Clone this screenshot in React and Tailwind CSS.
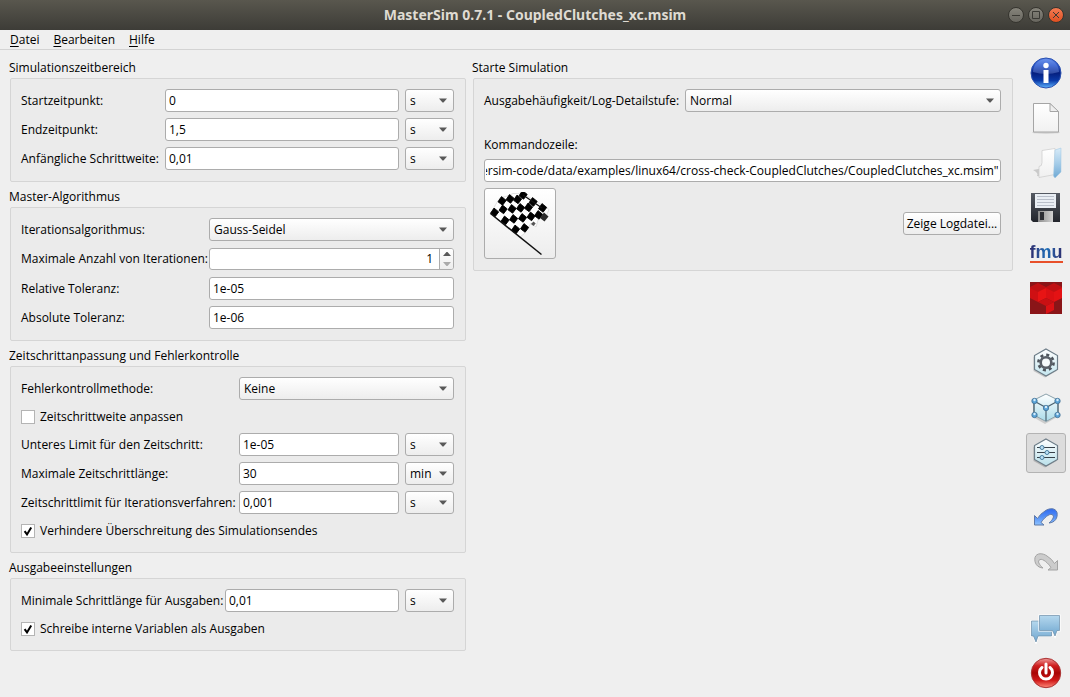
import { useLayoutEffect, useRef, useState } from "react";

const fieldBox =
  "h-[23px] w-full min-w-0 rounded-[3px] border border-[#acacac] bg-white text-black outline-none focus:border-[#6f9fd0]";
const raised = "rounded-[3px] border border-[#acacac] bg-gradient-to-b from-white to-[#ededed]";

function Group({ title, children }) {
  return (
    <section>
      <h2 className="h-[19px] leading-[18px]">{title}</h2>
      <div className="ml-px rounded-[2px] border border-[#d5d5d5] bg-[#ebebeb] pt-[10px] pr-[11px] pb-[11px] pl-[10px]">
        {children}
      </div>
    </section>
  );
}

function Select({ id, label, options }) {
  return (
    <div className="grid min-w-0 items-center">
      <select
        id={id}
        aria-label={label}
        className={`${raised} col-start-1 row-start-1 h-[23px] w-full appearance-none pr-5 pl-1 text-black outline-none`}
      >
        {options.map((o) => (
          <option key={o}>{o}</option>
        ))}
      </select>
      <svg
        viewBox="0 0 8 5"
        className="pointer-events-none col-start-1 row-start-1 mr-[7px] h-[5px] w-2 justify-self-end"
        aria-hidden="true"
      >
        <path d="M0 .5h8L4.500 4.500h-1z" fill="#595959" />
      </svg>
    </div>
  );
}

function TextField({ id, value }) {
  return <input id={id} type="text" defaultValue={value} className={`${fieldBox} px-[3px]`} />;
}

function TimeRow({ id, label, value, unit }) {
  return (
    <>
      <label htmlFor={id} className="whitespace-nowrap">{label}</label>
      <TextField id={id} value={value} />
      <Select label={`${label} Einheit`} options={unit === "min" ? ["min", "s", "h"] : ["s", "min", "h"]} />
    </>
  );
}

function Check({ label, checked }) {
  return (
    <label className="col-span-full flex h-[21px] items-center gap-[5px]">
      <span className="grid size-[14px] place-items-center">
        <input
          type="checkbox"
          defaultChecked={checked}
          className="peer col-start-1 row-start-1 size-[14px] appearance-none border border-[#b4b4b4] bg-white"
        />
        <svg
          viewBox="0 0 10 10"
          className="pointer-events-none invisible col-start-1 row-start-1 size-[10px] peer-checked:visible"
          aria-hidden="true"
        >
          <path d="M1.6 5.2 4 8.4 8.2 1.4" fill="none" stroke="#000" strokeWidth="2" />
        </svg>
      </span>
      {label}
    </label>
  );
}

function Spin({ id }) {
  const [n, setN] = useState(1);
  return (
    <div className="flex h-6 py-px">
      <div className="flex flex-1 overflow-hidden rounded-[3px] border border-[#acacac] bg-white">
        <input
          id={id}
          type="text"
          inputMode="numeric"
          value={n}
          onChange={(e) => setN(Number(e.target.value) || 1)}
          className="min-w-0 flex-1 px-[6px] text-right outline-none"
        />
        <div className="flex w-[14px] flex-col border-l border-[#acacac] bg-gradient-to-b from-white to-[#ededed]">
          <button type="button" aria-label="Erhöhen" onClick={() => setN(n + 1)} className="grid flex-1 place-items-center">
            <svg viewBox="0 0 8 4" className="h-1 w-2"><path d="M0 4h8L4.5 0h-1z" fill="#595959" /></svg>
          </button>
          <button type="button" aria-label="Verringern" onClick={() => setN(Math.max(1, n - 1))} className="grid flex-1 place-items-center">
            <svg viewBox="0 0 8 4" className="h-1 w-2"><path d="M0 0h8L4.5 4h-1z" fill="#aaa" /></svg>
          </button>
        </div>
      </div>
    </div>
  );
}

function CommandLine() {
  const ref = useRef(null);
  useLayoutEffect(() => {
    ref.current.scrollLeft = ref.current.scrollWidth;
  }, []);
  return (
    <input
      id="cmd"
      ref={ref}
      type="text"
      readOnly
      defaultValue={'stersim-code/data/examples/linux64/cross-check-CoupledClutches/CoupledClutches_xc.msim"'}
      className={`${fieldBox} px-px text-right`}
    />
  );
}

const flagSquares = [
  [35, 3], [14, 9], [22, 7], [29.5, 7.5], [45, 10], [54.500, 16],
  [6.500, 20.500], [15, 17.500], [24, 17], [32.500, 16], [40.500, 15.500],
  [17, 28.500], [25.500, 27], [34.500, 26], [43, 24.500], [50.500, 23],
  [27.500, 37.500], [36.500, 36],
];

function FlagIcon() {
  return (
    <svg viewBox="0 0 64 64" className="size-16" aria-hidden="true">
      <path
        d="M3 21.500Q8 11 12 6Q18 5 25 1.500Q30 2 33 1Q46 7 61 17.500L57 27L51 25L48 35L43 31L37 41L32 45Z"
        fill="#fefefe" stroke="#d4d4d4" strokeWidth=".7"
      />
      {flagSquares.map(([x, y]) => (
        <path
          key={`${x}-${y}`}
          d={`M${x - 0.5} ${y - 4.4}L${x + 4.2} ${y - 0.6}L${x + 0.6} ${y + 4.2}L${x - 4} ${y + 0.8}Z`}
          stroke="#000" strokeWidth=".9" strokeLinejoin="round"
        />
      ))}
      <path d="m56 20.500 4.500 4-4 5-4.500-3.500z" fill="#2c2c2c" />
      <path d="m45.500 29.500 2.200 2-2.200 2.500-2.500-2z" fill="#555" />
      <path d="m35 3 19 13" stroke="#111" strokeWidth="1.300" />
      <path d="M2.500 21.500 53.500 62.500" stroke="#111" strokeWidth="1.500" />
    </svg>
  );
}

const hex = "M16 2 27.500 8.500v14L16 29 4.500 22.500v-14z";

function Shade({ id, stops }) {
  return (
    <linearGradient id={id} x1="0" y1="0" x2="0" y2="1">
      {stops.map((c, i) => (
        <stop key={c + i} offset={i / (stops.length - 1)} stopColor={c} />
      ))}
    </linearGradient>
  );
}

const icons = {
  info: (
    <>
      <defs><Shade id="i1" stops={["#5b86e8", "#2450c4", "#061f7e", "#0a3aa8", "#5fb4ff"]} /></defs>
      <circle cx="16" cy="16" r="15" fill="url(#i1)" stroke="#2a50b0" />
      <path d="M3 15a13 13 0 0 1 26 0q-13 4-26 0z" fill="#9ab8ff" opacity=".3" />
      <circle cx="16" cy="8.500" r="2.700" fill="#fff" />
      <rect x="13.500" y="13" width="5" height="13" fill="#fff" />
    </>
  ),
  fresh: (
    <>
      <defs><Shade id="n1" stops={["#fff", "#f1f1f1"]} /></defs>
      <ellipse cx="16" cy="30.500" rx="14" ry="1.200" fill="#bbb" opacity=".6" />
      <path d="M3.500 1.500H20L28.500 10v20h-25z" fill="url(#n1)" stroke="#a5a5a5" />
      <path d="M20 1.500V9.500h8.500z" fill="#eee" stroke="#a5a5a5" />
    </>
  ),
  open: (
    <>
      <defs>
        <Shade id="o1" stops={["#fff", "#f0f0f0"]} />
        <Shade id="o2" stops={["#d8ebf8", "#a6cde9", "#6fa9d4"]} />
      </defs>
      <path d="M3 23 11 21.500v8L7 29q2-3-4-6z" fill="#c9c9c9" />
      <path d="M12 3.500 25 1.500v26l-16 3v-11q3 0 3-4z" fill="url(#o1)" stroke="#cfcfcf" strokeWidth=".8" />
      <path d="M25 3 31 1v24l-6 6-1.500-2z" fill="url(#o2)" stroke="#9fc7e2" strokeWidth=".5" />
    </>
  ),
  save: (
    <>
      <defs>
        <Shade id="s1" stops={["#555a63", "#22252c"]} />
        <linearGradient id="s2"><stop stopColor="#8b8b8b" /><stop offset="1" stopColor="#d2d2d2" /></linearGradient>
      </defs>
      <path d="M1 1h29v29H3l-2-2z" fill="url(#s1)" />
      <path d="M5 2h21v14H5z" fill="#e9eef4" />
      <path d="M7 4.500h17M7 7.500h17M7 10.500h17M7 13.500h17" stroke="#b9bfca" />
      <path d="M8 19h15v11H8z" fill="url(#s2)" />
      <path d="M10 20h4v8h-4z" fill="#2b2d33" />
    </>
  ),
  modelica: (
    <>
      <rect width="32" height="32" fill="#8a1518" />
      <path d="M0 5 8 1l8 4 8-4 8 4v2l-8 4-8-4-8 4-8-4z" fill="#c01013" />
      <path d="M0 6l8 4v10l-8-4z" fill="#cf1013" />
      <path d="m8 10 8-4v10l-8 4z" fill="#e81414" />
      <path d="m16 6 8 4v10l-8-4z" fill="#db1013" />
      <path d="m24 10 8-4v10l-8 4z" fill="#e41214" />
      <path d="m8 20 8-4 8 4-8 4z" fill="#c91013" />
      <path d="m16 24 8-4v8l-8 4z" fill="#dc1114" />
    </>
  ),
  gear: (
    <>
      <defs><Shade id="g1" stops={["#fff", "#c4e6ef"]} /></defs>
      <path d={hex} transform="translate(-1 1.500)" fill="#aaa" opacity=".6" />
      <path d={hex} fill="url(#g1)" stroke="#6d7d88" strokeWidth="1.200" />
      <circle cx="16" cy="15.500" r="7.600" fill="none" stroke="#4d535b" strokeWidth="2.600" strokeDasharray="2.985 2.985" />
      <circle cx="16" cy="15.500" r="5.300" fill="#f7fbfc" stroke="#5a6068" strokeWidth="2.600" />
    </>
  ),
  cube: (
    <>
      <defs><Shade id="c1" stops={["#fff", "#a9dbe9"]} /></defs>
      <path d="m15 4 12 6v15l-12 7-12-7V10z" fill="#aaa" opacity=".5" />
      <path d="m16 2 12 6v15l-12 6.500L4 23V8z" fill="url(#c1)" stroke="#8aa1ab" />
      <path d="M4 9 16 15.500 28 9M16 15v14M4 9v14M28 9v14" fill="none" stroke="#4d6370" strokeWidth="1.200" />
      {[[4.500, 9], [27.500, 9], [16, 16], [4.500, 23], [27.500, 23]].map(([x, y]) => (
        <g key={`${x}-${y}`}>
          <circle cx={x} cy={y} r="2.700" fill="#5ba4d8" stroke="#3f6f93" strokeWidth=".8" />
          <circle cx={x} cy={y - 1} r="1.200" fill="#d5edfb" />
        </g>
      ))}
    </>
  ),
  sliders: (
    <>
      <defs><Shade id="t1" stops={["#fff", "#b9e0ea"]} /></defs>
      <path d={hex} transform="translate(-1 1.500)" fill="#999" opacity=".6" />
      <path d={hex} fill="url(#t1)" stroke="#6d7d88" strokeWidth="1.200" />
      <path d="M7 10.500h18M7 15.500h18M7 20.500h18" stroke="#39424a" strokeWidth="1.200" />
      {[[12, 10.5], [17, 15.5], [12, 20.5]].map(([x, y]) => (
        <circle key={y} cx={x} cy={y} r="2" fill="#bfe2f5" stroke="#4a7fa0" />
      ))}
    </>
  ),
  undo: (
    <>
      <defs><Shade id="u1" stops={["#2f6af0", "#5590f6", "#8ec3ff"]} /></defs>
      <path
        d="M4.500 13.500V23H14l-3-2.500C14 16 19 11.500 22 12.500c3 1.500 1 5-3 8.500 6-.5 9-5 8-10.500-1.500-5-8-4.500-12-1.500Q10 12 7.500 16.500z"
        fill="url(#u1)" stroke="#5f7aa8" strokeLinejoin="round"
      />
    </>
  ),
  redo: (
    <path
      d="M27.500 13.500V23H18l3-2.500C18 16 13 11.500 10 12.500c-3 1.500-1 5 3 8.500-6-.5-9-5-8-10.500 1.500-5 8-4.500 12-1.500Q22 12 24.500 16.500z"
      fill="#ccc" stroke="#a4a4a4" strokeLinejoin="round"
    />
  ),
  chat: (
    <>
      <defs><Shade id="m1" stops={["#b5d8ee", "#6fa6cf"]} /></defs>
      <path d="M1.500 9h20v15H8l-2 6-2.500-6h-2z" fill="url(#m1)" stroke="#fff" strokeWidth="2.200" />
      <path d="M1.500 9h20v15H8l-2 6-2.500-6h-2z" fill="url(#m1)" stroke="#6c8da8" strokeWidth=".7" />
      <path d="M9.500 3.500h20v15h-2.500l-2 5.500-2.500-5.500h-13z" fill="url(#m1)" stroke="#fff" strokeWidth="2.200" />
      <path d="M9.500 3.500h20v15h-2.500l-2 5.500-2.500-5.500h-13z" fill="url(#m1)" stroke="#6c8da8" strokeWidth=".7" />
    </>
  ),
  power: (
    <>
      <defs><Shade id="p1" stops={["#f09a9a", "#cf2020", "#a80505", "#d01818", "#ff8a7a"]} /></defs>
      <circle cx="16" cy="16" r="14.700" fill="url(#p1)" stroke="#a33" />
      <path d="M12 10.500a6.500 6.500 0 1 0 8 0" fill="none" stroke="#fff" strokeWidth="3" strokeLinecap="round" />
      <path d="M16 7v9" stroke="#fff" strokeWidth="3" strokeLinecap="round" />
    </>
  ),
};

function Tool({ icon, label, active }) {
  return (
    <button
      type="button"
      aria-label={label}
      className={`grid size-10 place-items-center rounded-[3px] border ${
        active ? "border-[#b3b3b3] bg-[#dcdcdc]" : "border-transparent"
      }`}
    >
      {icon === "fmu" ? (
        <span className="border-b-2 border-[#e8502a] bg-gradient-to-r from-[#2b2a6c] via-[#1a6fb8] to-[#2b2a6c] bg-clip-text font-['Liberation_Sans',sans-serif] text-[18px] leading-[17px] font-bold text-transparent">
          fmu
        </span>
      ) : (
        <svg viewBox="0 0 32 32" className="size-8" aria-hidden="true">{icons[icon]}</svg>
      )}
    </button>
  );
}

function WindowButton({ label, close, children }) {
  return (
    <button
      type="button"
      aria-label={label}
      className={`grid size-4 place-items-center rounded-full border border-[#36352f] ${
        close ? "bg-gradient-to-b from-[#f47b52] to-[#de4f1f]" : "bg-gradient-to-b from-[#86847b] to-[#68665f]"
      }`}
    >
      <svg viewBox="0 0 10 10" className="size-[10px]" fill="none" stroke="#3a3934">{children}</svg>
    </button>
  );
}

export default function App() {
  return (
    <div className="flex min-h-screen flex-col bg-[#efefef] font-['Open_Sans','Noto_Sans',sans-serif] text-[12px] leading-4 text-black">
      <header className="grid h-[30px] grid-cols-[1fr_auto_1fr] items-center bg-gradient-to-b from-[#59574e] to-[#3d3c37] px-[6px]">
        <h1 className="col-start-2 font-['Noto_Sans',sans-serif] text-[14px] font-bold text-[#dfdbd2]">
          MasterSim 0.7.1 - CoupledClutches_xc.msim
        </h1>
        <div className="flex gap-1 justify-self-end">
          <WindowButton label="Minimieren"><path d="M1 5.500h8" /></WindowButton>
          <WindowButton label="Maximieren"><path d="M1.500 1.500h7v7h-7z" /></WindowButton>
          <WindowButton label="Schließen" close><path d="m2 2 6 6m0-6-6 6" /></WindowButton>
        </div>
      </header>
      <nav className="flex h-5 items-center gap-[14px] border-b border-[#d3d3d3] px-[10px]">
        {["Datei", "Bearbeiten", "Hilfe"].map((m) => (
          <button key={m} type="button">
            <span className="underline underline-offset-2">{m[0]}</span>{m.slice(1)}
          </button>
        ))}
      </nav>
      <div className="flex flex-1 gap-[13px] pr-1 pl-[9px]">
        <main className="grid flex-1 grid-cols-[457fr_541fr] items-start gap-[6px] pt-[9px]">
          <div className="flex flex-col gap-[6px]">
            <Group title="Simulationszeitbereich">
              <div className="grid grid-cols-[138px_1fr_49px] items-center gap-[6px]">
                <TimeRow id="start" label="Startzeitpunkt:" value="0" unit="s" />
                <TimeRow id="end" label="Endzeitpunkt:" value="1,5" unit="s" />
                <TimeRow id="step" label="Anfängliche Schrittweite:" value="0,01" unit="s" />
              </div>
            </Group>
            <Group title="Master-Algorithmus">
              <div className="grid grid-cols-[182px_1fr] items-center gap-[6px]">
                <label htmlFor="algo">Iterationsalgorithmus:</label>
                <Select id="algo" options={["Gauss-Seidel", "Gauss-Jacobi", "Newton"]} />
                <label htmlFor="iter" className="whitespace-nowrap">Maximale Anzahl von Iterationen:</label>
                <Spin id="iter" />
                <label htmlFor="rel">Relative Toleranz:</label>
                <TextField id="rel" value="1e-05" />
                <label htmlFor="abs">Absolute Toleranz:</label>
                <TextField id="abs" value="1e-06" />
              </div>
            </Group>
            <Group title="Zeitschrittanpassung und Fehlerkontrolle">
              <div className="grid grid-cols-[212px_1fr_49px] items-center gap-[6px]">
                <label htmlFor="err">Fehlerkontrollmethode:</label>
                <div className="col-span-2"><Select id="err" options={["Keine"]} /></div>
                <Check label="Zeitschrittweite anpassen" />
                <TimeRow id="low" label="Unteres Limit für den Zeitschritt:" value="1e-05" unit="s" />
                <TimeRow id="max" label="Maximale Zeitschrittlänge:" value="30" unit="min" />
                <TimeRow id="lim" label="Zeitschrittlimit für Iterationsverfahren:" value="0,001" unit="s" />
                <Check label="Verhindere Überschreitung des Simulationsendes" checked />
              </div>
            </Group>
            <Group title="Ausgabeeinstellungen">
              <div className="grid grid-cols-[198px_1fr_49px] items-center gap-[6px]">
                <TimeRow id="out" label="Minimale Schrittlänge für Ausgaben:" value="0,01" unit="s" />
                <Check label="Schreibe interne Variablen als Ausgaben" checked />
              </div>
            </Group>
          </div>
          <Group title="Starte Simulation">
            <div className="grid grid-cols-[195px_1fr] items-center gap-[6px]">
              <label htmlFor="log" className="whitespace-nowrap">Ausgabehäufigkeit/Log-Detailstufe:</label>
              <Select id="log" options={["Normal"]} />
            </div>
            <div className="flex flex-col gap-[6px] pt-[25px]">
              <label htmlFor="cmd">Kommandozeile:</label>
              <CommandLine />
              <div className="flex items-center justify-between">
                <button type="button" aria-label="Simulation starten" className={`${raised} grid h-[71px] w-[72px] place-items-center`}>
                  <FlagIcon />
                </button>
                <button type="button" className={`${raised} h-[23px] w-[98px] whitespace-nowrap`}>Zeige Logdatei...</button>
              </div>
            </div>
          </Group>
        </main>
        <aside className="flex flex-col gap-[5px] pt-[3px]">
          <Tool icon="info" label="Info" />
          <Tool icon="fresh" label="Neu" />
          <Tool icon="open" label="Öffnen" />
          <Tool icon="save" label="Speichern" />
          <Tool icon="fmu" label="FMU" />
          <Tool icon="modelica" label="FMUs analysieren" />
          <div className="h-[15px]" />
          <Tool icon="gear" label="Modell" />
          <Tool icon="cube" label="Verbindungen" />
          <Tool icon="sliders" label="Simulation" active />
          <div className="h-[15px]" />
          <Tool icon="undo" label="Rückgängig" />
          <Tool icon="redo" label="Wiederholen" />
          <div className="h-[15px]" />
          <Tool icon="chat" label="Sprache" />
          <Tool icon="power" label="Beenden" />
        </aside>
      </div>
    </div>
  );
}
